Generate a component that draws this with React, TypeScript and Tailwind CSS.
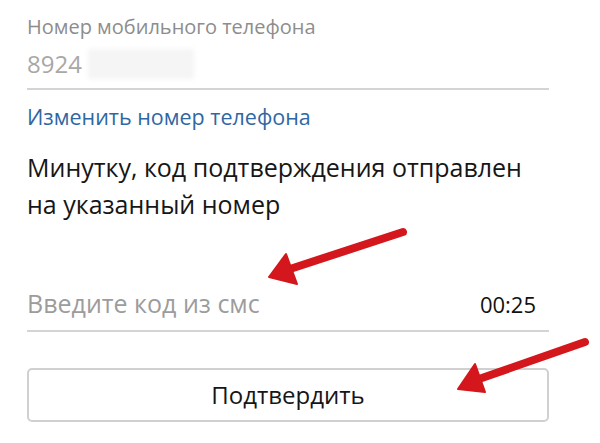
import React from 'react';

const font = { fontFamily: '"Open Sans", "Liberation Sans", Arial, sans-serif' };

function Arrows() {
  return (
    <svg className="absolute inset-0 pointer-events-none" width="600" height="443" viewBox="0 0 600 443">
      <g fill="#d3171c" stroke="#d3171c" strokeLinejoin="round">
        <line x1="403" y1="232" x2="290" y2="269" strokeWidth="8" strokeLinecap="round" />
        <polygon points="269,277 286,254 297,284" strokeWidth="2" />
        <line x1="585" y1="342" x2="479" y2="379" strokeWidth="8" strokeLinecap="round" />
        <polygon points="458,389 475,364 485,392" strokeWidth="2" />
      </g>
    </svg>
  );
}

export default function App() {
  return (
    <div className="relative w-[600px] h-[443px] overflow-hidden bg-white" style={font}>
      <div className="w-[549px] pl-[27px]">
        {/* phone field */}
        <div className="pt-[14px] text-[20px] leading-[26px] text-[#8d8d8d]">Номер мобильного телефона</div>
        <div className="flex h-[50px] items-center border-b-2 border-[#d4d4d4]">
          <span className="text-[24px] text-[#a8a8a8]">8924</span>
          <span className="ml-[6px] h-[30px] w-[106px] bg-[#f5f5f5] blur-[2px]" />
        </div>
        <div className="mt-[14px] text-[21.5px] leading-[26px] text-[#2f67a3]">Изменить номер телефона</div>

        {/* message */}
        <p className="mt-[19px] text-[25px] leading-[37px] text-[#161616]">
          Минутку, код подтверждения отправлен
          <br />
          на указанный номер
        </p>

        {/* code field */}
        <div className="mt-[55px] flex h-[52px] box-content items-center justify-between border-b-2 border-[#d4d4d4] pr-[13px]">
          <span className="text-[25px] text-[#9c9c9c]">Введите код из смс</span>
          <span className="text-[22px] text-[#111]">00:25</span>
        </div>

        <button className="mt-[36px] flex h-[54px] w-full items-center justify-center rounded-[5px] border-2 border-[#d0d0d0] bg-white text-[24px] text-[#161616]">
          Подтвердить
        </button>
      </div>
      <Arrows />
    </div>
  );
}
